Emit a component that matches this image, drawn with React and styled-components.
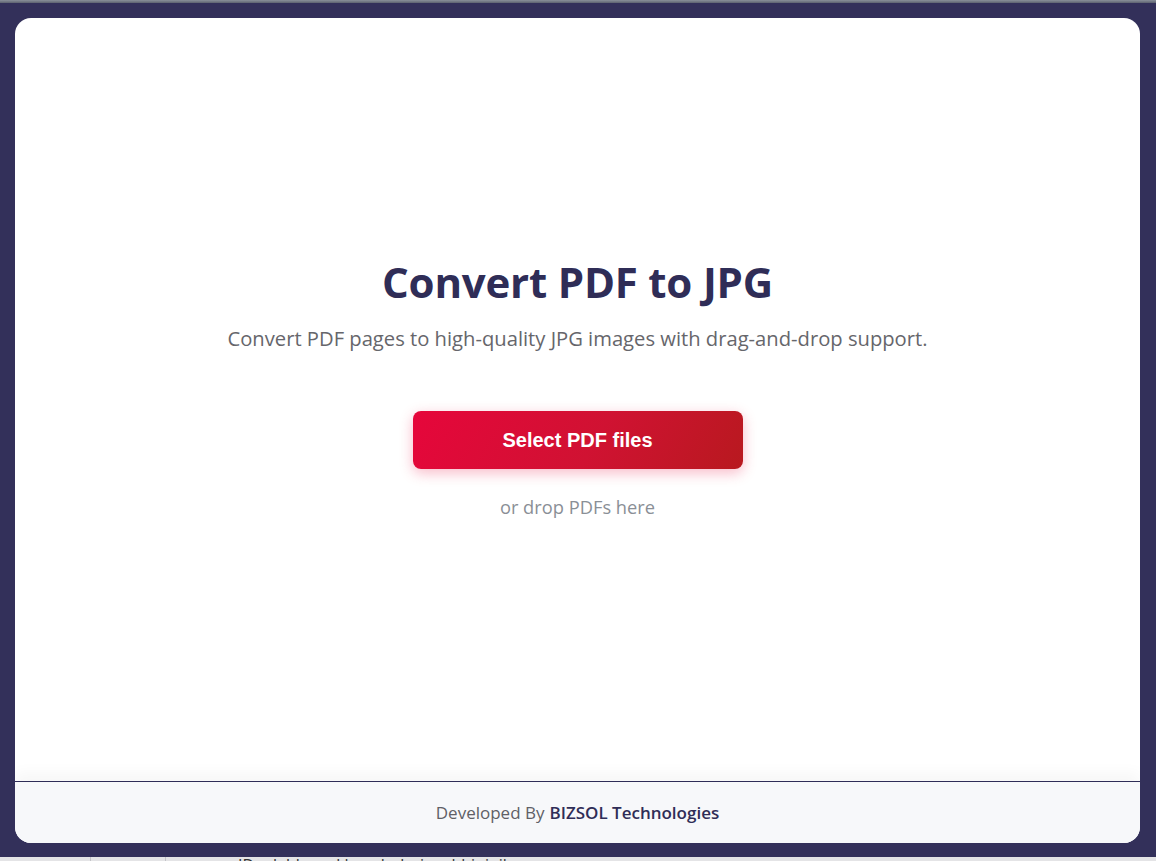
import React from "react";
import styled, { createGlobalStyle } from "styled-components";

const GlobalStyle = createGlobalStyle`
    html, body {
        margin: 0;
        padding: 0;
        background: #33305a;
    }
    * { box-sizing: border-box; }
`;

const Page = styled.div`
    width: 1156px;
    height: 861px;
    display: flex;
    flex-direction: column;
    overflow: hidden;
    background: #33305a;
`;

const TopEdge = styled.div`
    height: 3px;
    background: linear-gradient(#8a909a, #5d6270);
    flex-shrink: 0;
`;

const Stage = styled.div`
    flex: 1;
    display: flex;
    padding: 15px 16px 14px 15px;
    min-height: 0;
`;

const Card = styled.div`
    flex: 1;
    display: flex;
    flex-direction: column;
    background: #ffffff;
    border-radius: 16px;
    overflow: hidden;
`;

const Main = styled.main`
    flex: 1;
    display: flex;
    flex-direction: column;
    align-items: center;
    justify-content: center;
    padding-bottom: 23px;
    font-family: "Open Sans", "Noto Sans", sans-serif;
`;

const Title = styled.h1`
    margin: 0;
    font-size: 42px;
    line-height: 50px;
    font-weight: 700;
    color: #2f2d57;
    letter-spacing: -0.2px;
`;

const Subtitle = styled.p`
    margin: 17px 0 0;
    font-size: 20.2px;
    line-height: 28px;
    color: #66666b;
`;

const SelectButton = styled.button`
    margin-top: 59px;
    width: 330px;
    height: 58px;
    border: none;
    border-radius: 8px;
    background: linear-gradient(120deg, #e6063b 0%, #d01232 55%, #b8191f 100%);
    color: #ffffff;
    font-family: "Liberation Sans", Arial, sans-serif;
    font-size: 20px;
    font-weight: 700;
    box-shadow: 0 4px 14px rgba(230, 6, 59, 0.28);
    cursor: pointer;
`;

const DropHint = styled.span`
    margin-top: 26px;
    font-size: 18.3px;
    line-height: 24px;
    color: #8a8f96;
`;

const Footer = styled.footer`
    height: 62px;
    flex-shrink: 0;
    display: flex;
    align-items: center;
    justify-content: center;
    background: #f7f8fa;
    border-top: 1px solid #2f2d57;
    box-shadow: 0 -8px 14px rgba(0, 0, 0, 0.035);
    font-family: "Open Sans", "Noto Sans", sans-serif;
    font-size: 17px;
    color: #5f6066;
`;

const Brand = styled.strong`
    margin-left: 5px;
    font-weight: 600;
    color: #2f2d57;
`;

const BottomEdge = styled.div`
    height: 4px;
    flex-shrink: 0;
    display: flex;
    background: #e4e4e6;
    overflow: hidden;
`;

const EdgeCell = styled.div`
    width: ${props => props.w}px;
    border-right: 1px solid #c4c4c8;
    flex-shrink: 0;
`;

const EdgeText = styled.div`
    padding-left: ${props => props.indent}px;
    font-family: "Open Sans", sans-serif;
    font-size: 16px;
    line-height: 4px;
    padding-top: 6px;
    color: #333;
    white-space: nowrap;
`;

const App = () => (
    <>
        <GlobalStyle />
        <Page>
            <TopEdge />
            <Stage>
                <Card>
                    <Main>
                        <Title>Convert PDF to JPG</Title>
                        <Subtitle>Convert PDF pages to high-quality JPG images with drag-and-drop support.</Subtitle>
                        <SelectButton>Select PDF files</SelectButton>
                        <DropHint>or drop PDFs here</DropHint>
                    </Main>
                    <Footer>
                        Developed By <Brand>BIZSOL Technologies</Brand>
                    </Footer>
                </Card>
            </Stage>
            <BottomEdge>
                <EdgeCell w={91} />
                <EdgeCell w={75} />
                <EdgeText indent={72}>ID mlablaoeakkeanbnbpinaabbininik</EdgeText>
            </BottomEdge>
        </Page>
    </>
);

export default App;
